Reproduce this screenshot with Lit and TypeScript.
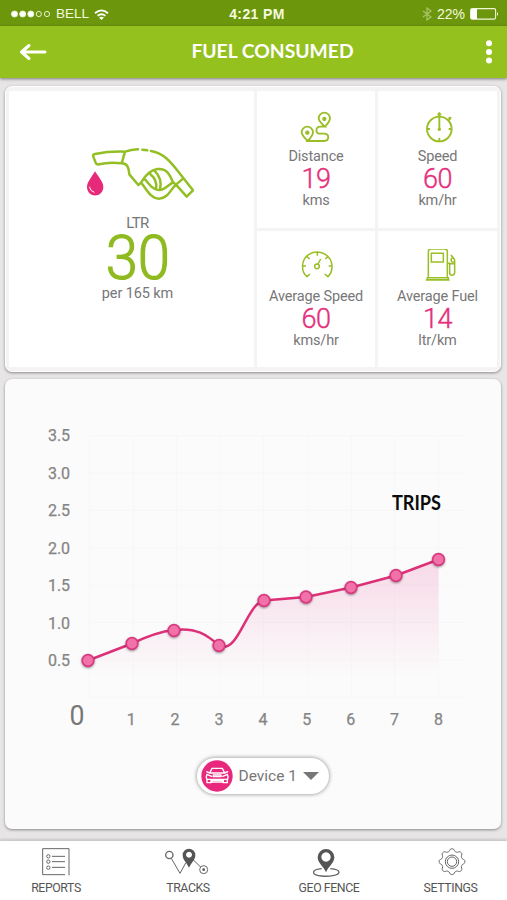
import { LitElement, html, svg, css } from "lit";
import { customElement } from "lit/decorators.js";

const distanceIcon = html`<svg class="icon" width="34" height="34" viewBox="132 71 102 102">
  <path d="M158 164C150 156 140 147 140 138a17 17 0 0 1 34 0C174 147 166 156 158 164H207c17 0 17-22 0-22H195c-14 0-15-21 0-21H210C201 112 191 106 191 96a17 17 0 0 1 34 0C225 106 217 113 210 121"/>
  <circle class="solid" cx="157" cy="139" r="6.5"/><circle class="solid" cx="208" cy="98" r="6.5"/>
</svg>`;

const speedIcon = html`<svg class="icon" width="34" height="34" viewBox="498 71 102 102">
  <circle cx="553" cy="128" r="37"/>
  <path d="M553 78V128M547 84h12M580 96l8-2M582 102l6-9M553 155v10M516 128h9M581 128h9"/>
  <circle class="solid" cx="553" cy="129" r="5"/>
</svg>`;

const gaugeIcon = html`<svg class="icon thin" width="36" height="34" viewBox="130 67 108 102">
  <path d="M166 139l-9 8C137 130 140 93 163 80c16-10 36-9 50 1 23 15 25 48 7 66l-10-8M188 73v11M157 87l8 7M144 115h10M222 115h11M219 87l-7 7M190 109l8-15"/>
  <circle cx="187" cy="116" r="7"/>
</svg>`;

const pumpIcon = html`<svg class="icon thin" width="36" height="36" viewBox="498 64 108 108">
  <path d="M523 149V72q0-8 8-8h40q9 0 9 8v77M515 157h72M520 150h63v6h-63zM532 77h36v26h-36zM580 107h7v27q0 9 7 9 8 0 8-9V97l-11-15M588 108h13M594 91q-6 6 0 12h7M591 82l10 12"/>
</svg>`;

const nozzleIcon = html`<svg class="nozzle" width="112" height="60" viewBox="45 30 336 180">
  <path class="line" d="M165 53C135 52 104 54 75 60Q67 62 70 68L77 86Q79 93 87 91C111 85 134 85 155 88ZM165 53Q184 47 204 46M217 47L232 49M243 51C282 57 304 86 328 117L369 169 350 188 318 152 340 133M155 88C175 89 176 104 178 121L205 153 213 146C224 127 241 108 262 105 291 102 300 123 309 145L318 152C302 164 296 193 267 194 241 194 230 165 213 146M226 137C240 154 247 164 258 166 279 174 294 154 309 145M241 121Q263 138 258 166M253 110Q278 133 270 167"/>
  <path class="drop" d="M75 112C66 127 51 145 51 158 51 193 100 193 100 158 100 145 85 127 75 112Z"/>
  <path class="shine" d="M58 158Q61 172 73 175"/>
</svg>`;

const reportsIcon = html`<svg class="tab" width="32" height="32" viewBox="122 50 96 96">
  <path d="M197 136H130V58h79v80M158 81h39M158 97h39M158 114h39"/>
  <circle cx="147" cy="81" r="5"/><circle cx="147" cy="97" r="5"/><circle cx="147" cy="115" r="5"/>
</svg>`;

const tracksIcon = html`<svg class="tab" width="48" height="32" viewBox="493 50 144 96">
  <circle class="bold" cx="509" cy="77" r="11"/>
  <path d="M515 87L541 132 558 101M580 91L603 113"/>
  <path class="solid" fill-rule="evenodd" d="M568 115C560 99 549 91 549 77a19 19 0 0 1 38 0C587 91 576 99 568 115ZM568 67a9 9 0 1 0 .1 0Z"/>
  <circle cx="612" cy="121" r="12"/><circle class="solid" cx="612" cy="121" r="4"/>
</svg>`;

const fenceIcon = html`<svg class="tab" width="32" height="32" viewBox="180 50 96 96">
  <path class="bold" d="M206 118C174 121 173 137 206 140 227 142 258 139 258 129 258 122 246 119 232 118"/>
  <path class="solid" fill-rule="evenodd" d="M219 129C212 112 194 101 194 84a25 25 0 0 1 50 0C244 101 226 112 219 129ZM219 69a14 14 0 1 0 .1 0Z"/>
</svg>`;

const gearPath = () => {
  const points: string[] = [];
  for (let i = 0; i <= 96; i++) {
    const angle = (i / 96) * Math.PI * 2;
    const wave = Math.cos(angle * 8);
    const radius = 35 + 3.6 * Math.sign(wave) * Math.sqrt(Math.abs(wave));
    points.push(`${(597 + radius * Math.cos(angle)).toFixed(1)} ${(97 + radius * Math.sin(angle)).toFixed(1)}`);
  }
  return `M${points.join("L")}Z`;
};

const gearIcon = html`<svg class="tab" width="32" height="32" viewBox="546 50 96 96">
  <path d=${gearPath()}/><circle cx="597" cy="97" r="20"/><circle cx="597" cy="97" r="14"/>
</svg>`;

const carIcon = html`<svg width="32" height="32" viewBox="61 46 96 96">
  <circle cx="109" cy="94" r="47" fill="#e9287d"/>
  <g fill="none" stroke="#fff" stroke-width="4.2" stroke-linejoin="round" stroke-linecap="round">
    <path d="M87 85L94 71H125L132 85M78 81l9 4H132l9-4M79 89q-4 6 0 16v9h12v-7M140 89q4 6 0 16v9H128v-7M79 104H140M94 107h31v5H94zM98 91h23v5H98zM80 90l13 5M139 90l-13 5"/>
  </g>
</svg>`;

const stats = [
  { icon: distanceIcon, name: "Distance", value: "19", unit: "kms" },
  { icon: speedIcon, name: "Speed", value: "60", unit: "km/hr" },
  { icon: gaugeIcon, name: "Average Speed", value: "60", unit: "kms/hr" },
  { icon: pumpIcon, name: "Average Fuel", value: "14", unit: "ltr/km" },
];

const tabs = [
  { icon: reportsIcon, name: "REPORTS" },
  { icon: tracksIcon, name: "TRACKS" },
  { icon: fenceIcon, name: "GEO FENCE" },
  { icon: gearIcon, name: "SETTINGS" },
];

const trips = [[88, 660.5], [132, 643.5], [174, 630.5], [219, 645.5], [264, 600.5], [306, 597], [351, 587.5], [396, 575.5], [438.5, 559.5]];
const curve = "M88 660.5L132 643.5Q156 632 174 630C196 627 207 635 219 645.5 238 656 246 604 264 600.5L306 597 351 587.5 396 575.5 438.5 559.5";

@customElement("trips-chart")
class TripsChart extends LitElement {
  static styles = css`
    :host { display: block; }
    svg { display: block; }
    text { font-family: Roboto, sans-serif; fill: #858585; }
    .axis { font-size: 16px; stroke: #858585; stroke-width: 0.25px; }
    .origin { font-size: 28px; fill: #777; }
    .title { font: bold 20px Lato, sans-serif; fill: #0c0c0c; }
    .grid { stroke: #f7f7f8; }
    .curve { fill: none; stroke: #dc3077; stroke-width: 2.5; }
    .dot { fill: #f072a8; stroke: #dc3880; stroke-width: 1.7; filter: drop-shadow(0 1.5px 1px #0006); }
  `;
  render() {
    const rows = [3.5, 3, 2.5, 2, 1.5, 1, 0.5];
    return html`<svg width="494" height="340" viewBox="6 400 494 340">
      <defs><linearGradient id="fade" gradientUnits="userSpaceOnUse" x1="0" y1="560" x2="0" y2="676">
        <stop offset="0" stop-color="#e22a80" stop-opacity=".16"/><stop offset="1" stop-color="#e22a80" stop-opacity="0"/>
      </linearGradient></defs>
      ${[0, 1, 2, 3, 4, 5, 6, 7].map((i) => svg`<path class="grid" d="M88 ${435.5 + i * 37.4}H464"/>`)}
      ${[0, 1, 2, 3, 4, 5, 6, 7, 8].map((i) => svg`<path class="grid" d="M${89.5 + Math.round(i * 43.6)} 435V697"/>`)}
      <path d="${curve}V690H88Z" fill="url(#fade)"/>
      <path class="curve" d=${curve}/>
      ${trips.map(([x, y]) => svg`<circle class="dot" cx=${x} cy=${y} r="5.8"/>`)}
      ${rows.map((v, i) => svg`<text class="axis" x="48" y=${441.3 + i * 37.5} textLength="22">${v.toFixed(1)}</text>`)}
      <text class="origin" x="69.5" y="724.5" textLength="15" lengthAdjust="spacingAndGlyphs">0</text>
      ${[1, 2, 3, 4, 5, 6, 7, 8].map((n) => svg`<text class="axis" text-anchor="middle" x=${87.3 + n * 43.9} y="725">${n}</text>`)}
      <text class="title" x="392" y="510" textLength="49" lengthAdjust="spacingAndGlyphs">TRIPS</text>
    </svg>`;
  }
}

@customElement("app-root")
class AppRoot extends LitElement {
  static styles = css`
    :host { display: flex; flex-direction: column; height: 900px; background: #e7e5e6; font-family: Roboto, sans-serif; color: #777; overflow: hidden; }
    * { box-sizing: border-box; }
    svg { display: block; flex: none; }
    .status { height: 26px; display: grid; grid-template-columns: 1fr auto 1fr; align-items: center; background: #6c960b; color: #f4fadf; font: 13.5px/26px "Liberation Sans", sans-serif; padding: 1px 8px 0 10px; }
    .side { display: flex; align-items: center; gap: 5px; }
    .end { justify-content: flex-end; }
    .percent { font-size: 14px; }
    .clock { font-weight: bold; font-size: 14px; letter-spacing: 0.4px; padding-left: 5px; }
    .header { height: 52px; flex: none; display: flex; align-items: center; justify-content: space-between; padding: 0 13px 0 19px; background: #95c11f; box-shadow: 0 1px 3px #0007; color: #fff; z-index: 1; }
    .heading { font: bold 19.3px/50px Lato, sans-serif; padding-left: 14px; margin-top: -2px; }
    .card { margin: 0 6px 0 5px; border-radius: 7px; box-shadow: 0 1px 3px #0006; flex: none; }
    .summary { margin-top: 8px; height: 286px; background: #f4f4f4; border: 1px solid #fff; padding: 4px 3px; display: grid; grid-template-columns: 245px 1fr; gap: 3px; }
    .main, .stat { background: #fff; display: flex; flex-direction: column; align-items: center; }
    .main { padding: 53px 0 0 12px; }
    .nozzle { margin-left: 6px; }
    .stats { display: grid; grid-template-columns: 118px 1fr; grid-template-rows: 1fr 1fr; gap: 3px; }
    .stat { padding-top: 17px; font-size: 14.5px; line-height: 20px; letter-spacing: -0.15px; }
    .picture { height: 38px; display: flex; align-items: center; }
    .name { margin-top: 1px; }
    .value { font-size: 27px; font-weight: 300; line-height: 25px; letter-spacing: -0.5px; color: #e62f7c; -webkit-text-stroke: 0.4px; }
    .unit { line-height: 17px; }
    .caption { font-size: 15px; line-height: 18px; letter-spacing: -0.6px; margin-top: 10px; }
    .total { font-size: 61px; font-weight: 300; line-height: 52px; color: #8fba20; transform: scaleX(0.95); -webkit-text-stroke: 1.2px; }
    .per { font-size: 14.5px; line-height: 18px; letter-spacing: -0.1px; margin-top: 1px; }
    .icon { fill: none; stroke: #9abe25; stroke-width: 5.6; }
    .thin { stroke-width: 4.5; }
    .icon .solid { fill: #9abe25; stroke: none; }
    .line { fill: none; stroke: #93bf25; stroke-width: 7.5; stroke-linecap: round; stroke-linejoin: round; }
    .drop { fill: #e62978; }
    .shine { fill: none; stroke: #fff; stroke-width: 3; }
    .panel { margin-top: 7px; height: 450px; background: #fbfbfb; padding: 21px 1px 0; display: flex; flex-direction: column; align-items: center; }
    .device { margin: 18px 0 0 19px; width: 132px; height: 36px; border-radius: 18px; background: #fff; box-shadow: 0 0 4px #0007; display: flex; align-items: center; padding-left: 4px; font-size: 15.5px; gap: 6px; }
    .caret { width: 0; height: 0; border: 8px solid transparent; border-top-color: #777; border-bottom: 0; }
    .tabs { margin-top: auto; height: 59px; flex: none; background: #fff; display: grid; grid-template-columns: 112px 152px 130px 1fr; box-shadow: 0 -2px 2px #0002; }
    .item { display: flex; flex-direction: column; align-items: center; padding-top: 5px; font-size: 12.3px; line-height: 21px; letter-spacing: -0.4px; color: #555; }
    .tab { fill: none; stroke: #666; stroke-width: 3; }
    .tab .bold { stroke-width: 4; }
    .tab .solid { fill: #555; stroke: none; }
  `;
  render() {
    return html`
      <div class="status">
        <div class="side">
          <svg width="41" height="10" viewBox="0 0 41 10" fill="#fff" stroke="#e8f2cc">
            <circle cx="4.5" cy="5" r="3"/><circle cx="12.7" cy="5" r="3"/><circle cx="20.8" cy="5" r="3"/>
            <circle cx="28.8" cy="5" r="2.6" fill="none"/><circle cx="37" cy="5" r="2.6" fill="none"/>
          </svg>
          <span>BELL</span>
          <svg width="15" height="11" viewBox="0 0 15 11" fill="none" stroke="#fff" stroke-width="1.8">
            <path d="M1 4.2q6.5-5.6 13 0M3.6 6.8q3.9-3.2 7.8 0"/><path d="M5 8.5q2.5-1.6 5 0L7.5 11z" fill="#fff" stroke="none"/>
          </svg>
        </div>
        <span class="clock">4:21 PM</span>
        <div class="side end">
          <svg width="10" height="14" viewBox="0 0 10 14" fill="none" stroke="#a9c56b" stroke-width="1.2"><path d="M1 4l8 6-4 3V1l4 3-8 6"/></svg>
          <span class="percent">22%</span>
          <svg width="29" height="12" viewBox="0 0 29 12"><rect x=".6" y=".6" width="25" height="10.5" rx="1.5" fill="none" stroke="#f1f8db" stroke-width="1.1"/><path d="M1 1h6v10H1z" fill="#fff"/><path d="M27 4q2 2 0 4z" fill="#fff"/></svg>
        </div>
      </div>
      <div class="header">
        <svg width="28" height="18" viewBox="0 0 28 18" fill="none" stroke="#fff" stroke-width="3" stroke-linecap="round" stroke-linejoin="round"><path d="M26 9H2.5M10 2.5L2.5 9l7.5 6.5"/></svg>
        <span class="heading">FUEL CONSUMED</span>
        <svg width="10" height="24" viewBox="0 0 10 24" fill="#fff"><circle cx="5" cy="3.2" r="3"/><circle cx="5" cy="12" r="3"/><circle cx="5" cy="20.5" r="3"/></svg>
      </div>
      <div class="card summary">
        <div class="main">
          ${nozzleIcon}
          <div class="caption">LTR</div>
          <div class="total">30</div>
          <div class="per">per 165 km</div>
        </div>
        <div class="stats">
          ${stats.map((s) => html`<div class="stat">
            <div class="picture">${s.icon}</div>
            <div class="name">${s.name}</div><div class="value">${s.value}</div><div class="unit">${s.unit}</div>
          </div>`)}
        </div>
      </div>
      <div class="card panel">
        <trips-chart></trips-chart>
        <div class="device">${carIcon}<span>Device 1</span><i class="caret"></i></div>
      </div>
      <div class="tabs">${tabs.map((t) => html`<div class="item">${t.icon}<span>${t.name}</span></div>`)}</div>
    `;
  }
}
